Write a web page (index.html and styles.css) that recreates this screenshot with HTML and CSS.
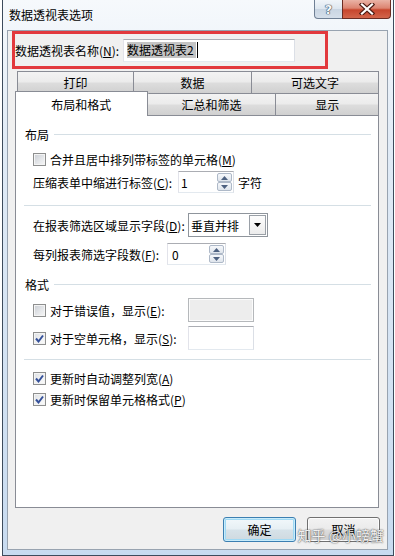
FILE: index.html
```html
<!DOCTYPE html>
<html lang="zh-CN">
<head>
    <meta charset="UTF-8">
    <title>数据透视表选项</title>
    <link rel="stylesheet" href="styles.css">
</head>
<body>

<div class="window">
    <!-- Title bar -->
    <div class="titlebar">
        <span class="title">数据透视表选项</span>
        <div class="caption">
            <div class="cap-btn cap-help">?</div>
            <div class="cap-btn cap-close">
                <svg width="16" height="12" viewBox="0 0 16 12">
                    <path d="M3 1.5 L13 10.5 M13 1.5 L3 10.5" stroke="#4a1a12" stroke-width="4.4" stroke-linecap="square" fill="none"/>
                    <path d="M3 1.5 L13 10.5 M13 1.5 L3 10.5" stroke="#fff" stroke-width="2.2" stroke-linecap="square" fill="none"/>
                </svg>
            </div>
        </div>
    </div>

    <div class="client">
        <div class="name-box">
            <span class="name-label">数据透视表名称(<u>N</u>):</span>
            <div class="name-input"><span class="selected-text">数据透视表2</span><span class="caret"></span></div>
        </div>

        <div class="tabs">
            <div class="tab-row tab-row-back">
                <div class="tab tab-print">打印</div>
                <div class="tab tab-data">数据</div>
                <div class="tab tab-alt">可选文字</div>
            </div>
            <div class="tab-row tab-row-front">
                <div class="tab tab-layout active">布局和格式</div>
                <div class="tab tab-totals">汇总和筛选</div>
                <div class="tab tab-display">显示</div>
            </div>

            <div class="panel">
                <div class="group-title">布局</div>

                <div class="row row-merge">
                    <span class="checkbox"></span>
                    <span>合并且居中排列带标签的单元格(<u>M</u>)</span>
                </div>

                <div class="row row-indent">
                    <span class="label label-indent">压缩表单中缩进行标签(<u>C</u>):</span>
                    <div class="spin">
                        <span class="spin-value">1</span>
                        <div class="spin-arrows">
                            <span class="arrow"><svg width="7" height="4" viewBox="0 0 7 4"><path d="M0 4 L3.5 0 L7 4 Z" fill="#4d6180"/></svg></span>
                            <span class="arrow"><svg width="7" height="4" viewBox="0 0 7 4"><path d="M0 0 L3.5 4 L7 0 Z" fill="#4d6180"/></svg></span>
                        </div>
                    </div>
                    <span class="unit">字符</span>
                </div>

                <div class="sep sep-first"></div>

                <div class="row row-filter-area">
                    <span class="label label-filter-area">在报表筛选区域显示字段(<u>D</u>):</span>
                    <div class="select">
                        <span class="select-value">垂直并排</span>
                        <span class="select-btn"><svg width="7" height="4" viewBox="0 0 7 4"><path d="M0 0 L3.5 4 L7 0 Z" fill="#000"/></svg></span>
                    </div>
                </div>

                <div class="row row-filter-count">
                    <span class="label label-filter-count">每列报表筛选字段数(<u>F</u>):</span>
                    <div class="spin spin-wide">
                        <span class="spin-value">0</span>
                        <div class="spin-arrows">
                            <span class="arrow"><svg width="7" height="4" viewBox="0 0 7 4"><path d="M0 4 L3.5 0 L7 4 Z" fill="#4d6180"/></svg></span>
                            <span class="arrow"><svg width="7" height="4" viewBox="0 0 7 4"><path d="M0 0 L3.5 4 L7 0 Z" fill="#4d6180"/></svg></span>
                        </div>
                    </div>
                </div>

                <div class="group-title group-format">格式</div>

                <div class="row row-error">
                    <span class="checkbox"></span>
                    <span class="label label-show">对于错误值，显示(<u>E</u>):</span>
                    <div class="text-box disabled"></div>
                </div>

                <div class="row row-empty">
                    <span class="checkbox checked">
                        <svg width="11" height="11" viewBox="0 0 11 11"><path d="M2 5.5 L4.5 8.5 L9 2.5" stroke="#34509a" stroke-width="2" fill="none"/></svg>
                    </span>
                    <span class="label label-show">对于空单元格，显示(<u>S</u>):</span>
                    <div class="text-box"></div>
                </div>

                <div class="sep sep-second"></div>

                <div class="row row-autofit">
                    <span class="checkbox checked">
                        <svg width="11" height="11" viewBox="0 0 11 11"><path d="M2 5.5 L4.5 8.5 L9 2.5" stroke="#34509a" stroke-width="2" fill="none"/></svg>
                    </span>
                    <span>更新时自动调整列宽(<u>A</u>)</span>
                </div>

                <div class="row row-preserve">
                    <span class="checkbox checked">
                        <svg width="11" height="11" viewBox="0 0 11 11"><path d="M2 5.5 L4.5 8.5 L9 2.5" stroke="#34509a" stroke-width="2" fill="none"/></svg>
                    </span>
                    <span>更新时保留单元格格式(<u>P</u>)</span>
                </div>
            </div>
        </div>

        <div class="footer">
            <button class="btn btn-default">确定</button>
            <button class="btn">取消</button>
        </div>

        <div class="watermark">知乎 @小螃蟹</div>
    </div>
</div>

</body>
</html>
```

FILE: styles.css
```css
* {
    box-sizing: border-box;
}

body {
    margin: 0;
    background-color: #fff;
    font-family: "Noto Sans CJK SC", "Liberation Sans", sans-serif;
    font-size: 12px;
    color: #000;
    overflow: hidden;
}

u {
    text-decoration: underline;
    text-underline-offset: 1px;
}

/* Window frame */
.window {
    margin-left: 2px;
    width: 392px;
    height: 556px;
    border: 1px solid #3d4b5c;
    border-top: none;
    padding: 0 5px 5px 4px;
    background: linear-gradient(#f6f9fc, #e1ebf6 140px, #c8dbf0);
    display: flex;
    flex-direction: column;
}

.titlebar {
    height: 30px;
    display: flex;
    align-items: flex-start;
    flex-shrink: 0;
}

.title {
    margin-left: 2px;
    line-height: 30px;
}

.caption {
    margin-left: auto;
    margin-right: -3px;
    display: flex;
}

.cap-btn {
    height: 19px;
    display: flex;
    align-items: center;
    justify-content: center;
    border: 1px solid #6f7f94;
    border-top: none;
}

.cap-help {
    width: 29px;
    border-radius: 0 0 0 4px;
    background: linear-gradient(#f1f5f9 0%, #dde6ef 50%, #c9d5e2 51%, #d5dfea 100%);
    color: #f7f9fb;
    font-family: "DejaVu Sans", sans-serif;
    font-weight: bold;
    font-size: 13px;
    text-shadow: 0 0 1px #2c3d52, 0 0 1px #2c3d52, 0 0 1px #2c3d52;
}

.cap-close {
    width: 49px;
    margin-left: -1px;
    border-color: #6b2c22;
    border-radius: 0 0 4px 0;
    background: linear-gradient(#eab3a6 0%, #dc8471 45%, #c7462d 55%, #d2654b 100%);
}

/* Client area */
.client {
    position: relative;
    width: 381px;
    height: 520px;
    border: 1px solid #98a3b0;
    background-color: #f0f0f0;
    padding: 0 7px 0 4px;
}

.name-box {
    width: 316px;
    height: 38px;
    border: 3px solid #e2393d;
    display: flex;
    align-items: center;
}

.name-label {
    width: 108px;
}

.name-input {
    width: 172px;
    height: 23px;
    border: 1px solid #abadb3;
    border-color: #abadb3 #dbdfe6 #e3e9ef #e2e3ea;
    background-color: #fff;
    padding-left: 3px;
    display: flex;
    align-items: center;
}

.selected-text {
    background-color: #c4c4c4;
    line-height: 16px;
    padding-right: 2px;
}

.caret {
    width: 1px;
    height: 16px;
    margin-left: 1px;
    background-color: #000;
}

/* Tabs */
.tabs {
    margin: 2px 0 0 3px;
    width: 364px;
}

.tab-row {
    display: flex;
    align-items: flex-start;
}

.tab-row-back {
    padding-left: 2px;
}

.tab {
    height: 22px;
    border: 1px solid #898c95;
    border-bottom: none;
    background: linear-gradient(#f3f3f3 0%, #ebebeb 48%, #dddddd 52%, #d0d0d0 100%);
    display: flex;
    align-items: center;
    justify-content: center;
}

.tab + .tab {
    margin-left: -1px;
}

.tab-row-front .tab {
    border-top-left-radius: 1px;
}

.tab-print { width: 117px; }
.tab-data { width: 119px; }
.tab-alt { width: 128px; }
.tab-layout { width: 133px; }
.tab-totals { width: 129px; }
.tab-display { width: 104px; }

.tab.active {
    position: relative;
    z-index: 1;
    height: 25px;
    margin-top: -2px;
    margin-bottom: -1px;
    background: #fff;
}

.tab-row-front .tab.active + .tab {
    border-left: none;
    margin-left: 0;
}

.panel {
    height: 393px;
    border: 1px solid #898c95;
    background-color: #fff;
    padding: 8px 7px 0 8px;
}

.group-title {
    height: 20px;
    padding-left: 1px;
    display: flex;
    align-items: center;
}

.group-title::after {
    content: "";
    flex: 1;
    height: 1px;
    margin-left: 5px;
    background-color: #d5dfe5;
}

.row {
    height: 20px;
    padding-left: 9px;
    display: flex;
    align-items: center;
}

.row-merge { margin-top: 5px; }
.row-indent { height: 22px; margin-top: 2px; }
.row-filter-area { height: 24px; margin-top: 7px; }
.row-filter-count { height: 22px; margin-top: 6px; }
.group-format { margin-top: 9px; }
.row-error { height: 24px; margin-top: 4px; }
.row-empty { height: 24px; margin-top: 4px; }
.row-autofit { margin-top: 8px; }
.row-preserve { margin-top: 1px; }

.sep {
    height: 1px;
    background-color: #d5dfe5;
}

.sep-first { margin-top: 12px; }
.sep-second { margin-top: 9px; }

.label-indent { width: 145px; }
.label-filter-area { width: 155px; }
.label-filter-count { width: 134px; }
.label-show { width: 138px; }

.checkbox {
    width: 13px;
    height: 13px;
    margin-right: 4px;
    border: 1px solid #8e8f8f;
    box-shadow: inset 0 0 0 1px #f4f4f4;
    background: linear-gradient(135deg, #c9cdd3 0%, #e4e6e9 55%, #f7f7f7 100%);
    display: flex;
    align-items: center;
    justify-content: center;
    flex-shrink: 0;
}

.checkbox.checked {
    background: linear-gradient(135deg, #dde0e4 0%, #f2f3f4 60%, #fbfbfb 100%);
}

/* Spinners, combo, text boxes */
.spin {
    width: 56px;
    height: 22px;
    border: 1px solid #abadb3;
    border-color: #abadb3 #dbdfe6 #e3e9ef #e2e3ea;
    background-color: #fff;
    display: flex;
}

.spin-wide {
    width: 59px;
}

.spin-value {
    flex: 1;
    padding-left: 2px;
    display: flex;
    align-items: center;
}

.spin-wide .spin-value {
    padding-left: 4px;
}

.spin-arrows {
    width: 16px;
    padding: 1px 1px 1px 0;
    display: flex;
    flex-direction: column;
}

.arrow {
    flex: 1;
    border: 1px solid #aeb9c8;
    border-radius: 2px;
    background: linear-gradient(#f6f8fb, #dfe5ec);
    display: flex;
    align-items: center;
    justify-content: center;
}

.unit {
    margin-left: 4px;
}

.select {
    width: 80px;
    height: 24px;
    border: 1px solid #8f959c;
    background-color: #fff;
    display: flex;
}

.select-value {
    flex: 1;
    padding-left: 2px;
    display: flex;
    align-items: center;
}

.select-btn {
    width: 17px;
    margin: 1px;
    border: 1px solid #9aa0a7;
    background: linear-gradient(#fdfdfd, #ececec);
    display: flex;
    align-items: center;
    justify-content: center;
}

.text-box {
    width: 66px;
    height: 24px;
    border: 1px solid #abadb3;
    border-color: #abadb3 #dbdfe6 #e3e9ef #e2e3ea;
    background-color: #fff;
}

.text-box.disabled {
    border-color: #b5b8bb;
    box-shadow: inset 0 0 0 1px #fbfbfb;
    background-color: #ededed;
}

/* Footer buttons */
.footer {
    margin-top: 9px;
    display: flex;
    justify-content: flex-end;
    gap: 11px;
}

.btn {
    width: 73px;
    height: 25px;
    border: 1px solid #707070;
    border-radius: 3px;
    background: linear-gradient(#f2f2f2 0%, #ebebeb 48%, #dddddd 52%, #cfcfcf 100%);
    box-shadow: inset 0 0 0 1px #fcfcfc;
    font: inherit;
    color: #000;
    padding: 0;
}

.btn-default {
    border-color: #3c7fb1;
    box-shadow: inset 0 0 0 1px #c8ecfb, inset 0 0 0 2px #9fd9f4;
    background: linear-gradient(#f2f8fb 0%, #e6eff4 48%, #d6e2e9 52%, #cfd9df 100%);
}

.watermark {
    position: absolute;
    right: 3px;
    bottom: 4px;
    font-size: 14px;
    line-height: 20px;
    color: rgba(255, 255, 255, 0.92);
    text-shadow: 0 0 1px #555, 0 0 2px rgba(0, 0, 0, 0.5);
}
```
